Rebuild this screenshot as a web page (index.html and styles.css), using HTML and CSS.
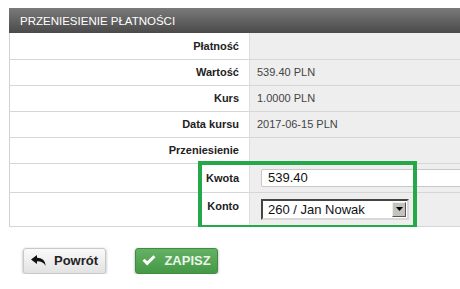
FILE: index.html
```html
<!DOCTYPE html>
<html lang="pl">
<head>
<meta charset="utf-8">
<link rel="stylesheet" href="styles.css">
</head>
<body>
<div class="page">
  <div class="panel">
    <div class="panel-head">PRZENIESIENIE PŁATNOŚCI</div>
    <table class="form">
      <tr class="r"><th>Płatność</th><td></td></tr>
      <tr class="r"><th>Wartość</th><td>539.40 PLN</td></tr>
      <tr class="r"><th>Kurs</th><td>1.0000 PLN</td></tr>
      <tr class="r"><th>Data kursu</th><td>2017-06-15 PLN</td></tr>
      <tr class="r"><th>Przeniesienie</th><td></td></tr>
      <tr class="r-kwota"><th>Kwota</th><td><input class="inp" type="text" value="539.40"></td></tr>
      <tr class="r-konto"><th class="konto-lbl">Konto</th><td>
        <div class="sel"><span class="sel-text">260 / Jan Nowak</span><span class="sel-btn"><svg width="7" height="4" viewBox="0 0 7 4"><path d="M0 0H7L3.5 4Z" fill="#000"/></svg></span></div>
      </td></tr>
    </table>
    <div class="highlight"></div>
  </div>
  <div class="actions">
    <button class="btn btn-back"><svg width="15" height="11" viewBox="0 0 15 11"><path d="M0 4.5L6 0V2.8C11 2.8 14.5 5.5 14.5 11C13 7.8 10.5 6.3 6 6.3V9Z" fill="#111"/></svg><span>Powrót</span></button>
    <button class="btn btn-save"><svg width="14" height="11" viewBox="0 0 14 11"><path d="M0.5 5.8L2.6 3.7L5.2 6.3L11.4 0.2L13.5 2.3L5.2 10.5Z" fill="#fff"/></svg><span>ZAPISZ</span></button>
  </div>
</div>
</body>
</html>
```
FILE: styles.css
```css
html, body {
  margin: 0;
  padding: 0;
  background: #fff;
  overflow: hidden;
}
body {
  font-family: "Liberation Sans", Arial, sans-serif;
  color: #333;
}
.page {
  padding: 8px 0 0 9px;
}
.panel {
  position: relative;
  width: 451px;
  overflow: hidden;
}
.panel-head {
  height: 25px;
  line-height: 26px;
  padding-left: 11px;
  color: #fff;
  font-size: 11.5px;
  background: linear-gradient(#7a7a7a, #4a4a4a);
}
.form {
  width: 100%;
  table-layout: fixed;
  border-collapse: collapse;
  font-size: 11px;
  border-left: 1px solid #d0d0d0;
}
.form th {
  width: 229px;
  text-align: right;
  font-weight: bold;
  color: #222;
  padding: 0 10px 0 0;
  background: #fff;
  border-right: 1px solid #ddd;
}
.form td {
  padding: 0 0 0 7px;
  background: #eeeeee;
  color: #444;
  white-space: nowrap;
}
.form tr {
  border-bottom: 1px solid #d6d6d6;
}
.r { height: 26px; }
.r-kwota { height: 29px; }
.r-konto { height: 34px; }
.konto-lbl { padding-bottom: 6px !important; }
.inp {
  display: block;
  margin-left: 4px;
  width: 220px;
  height: 18px;
  box-sizing: border-box;
  border: 1px solid #c8c8c8;
  border-radius: 2px;
  padding: 0 6px;
  font-family: "Liberation Sans", Arial, sans-serif;
  font-size: 13px;
  color: #111;
  background: #fff;
}
.sel {
  margin-left: 4px;
  width: 148px;
  height: 21px;
  box-sizing: border-box;
  display: flex;
  align-items: center;
  border: 2px solid;
  border-color: #444 #d8d8d8 #d8d8d8 #444;
  background: #fff;
  padding: 0 1px 0 5px;
}
.sel-text {
  flex: 1;
  font-size: 13px;
  color: #111;
  line-height: 17px;
}
.sel-btn {
  width: 14px;
  height: 15px;
  box-sizing: border-box;
  display: flex;
  align-items: center;
  justify-content: center;
  background: #c4c2bc;
  border: 1px solid;
  border-color: #eee #555 #555 #eee;
}
.highlight {
  position: absolute;
  left: 189px;
  top: 153px;
  width: 219px;
  height: 68px;
  box-sizing: border-box;
  border: 4px solid #25a84a;
}
.actions {
  display: flex;
  gap: 29px;
  margin-top: 21px;
  padding-left: 14px;
}
.btn {
  width: 83px;
  height: 26px;
  display: flex;
  align-items: center;
  justify-content: center;
  gap: 8px;
  border-radius: 3px;
  font-family: "Liberation Sans", Arial, sans-serif;
  font-size: 13px;
  font-weight: bold;
  padding: 0;
  cursor: pointer;
}
.btn-back {
  color: #222;
  border: 1px solid #c8c8c8;
  background: linear-gradient(#fafafa, #e2e2e2);
  box-shadow: 0 1px 3px rgba(0,0,0,0.35);
}
.btn-save {
  color: #e9f6e9;
  border: 1px solid #3f8b3f;
  background: linear-gradient(#64b264, #459845);
  box-shadow: 0 1px 3px rgba(0,0,0,0.35);
}
```
